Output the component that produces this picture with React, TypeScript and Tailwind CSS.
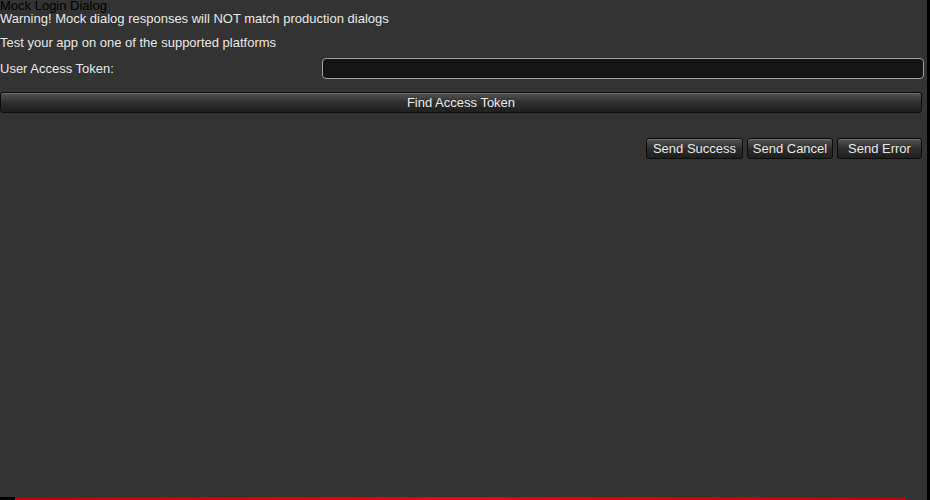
const font = { fontFamily: '"Liberation Sans", Arial, sans-serif' }

function DarkButton({ label, className }: { label: string; className?: string }) {
  return (
    <button
      className={
        'h-[21px] rounded-[3px] border border-[#0c0c0c] bg-gradient-to-b from-[#555] via-[#2e2e2e] to-[#1f1f1f] text-[13px] leading-[19px] text-[#e8e8e8] shadow-[inset_0_1px_0_rgba(255,255,255,0.15)] ' +
        (className ?? '')
      }
    >
      {label}
    </button>
  )
}

export default function App() {
  return (
    <div className="flex h-[500px] w-[930px] overflow-hidden bg-[#333333]" style={font}>
      <div className="flex w-[927px] flex-col">
        <div className="-mt-[1px] text-[13px] leading-[13px] text-black">Mock Login Dialog</div>
        <div className="text-[13px] leading-[14px] text-[#e8e8e8]">
          Warning! Mock dialog responses will NOT match production dialogs
        </div>
        <div className="mt-[10px] text-[13px] leading-[14px] text-[#e8e8e8]">
          Test your app on one of the supported platforms
        </div>
        <div className="mt-[8px] flex items-center">
          <div className="w-[322px] text-[13px] leading-[14px] text-[#e8e8e8]">User Access Token:</div>
          <div className="mr-[3px] h-[21px] flex-1 rounded-[4px] border border-[#a0a0a0] bg-[#151515]" />
        </div>
        <DarkButton label="Find Access Token" className="mt-[13px] w-[922px]" />
        <div className="mt-[25px] flex justify-end gap-[4px] pr-[5px]">
          <DarkButton label="Send Success" className="w-[97px]" />
          <DarkButton label="Send Cancel" className="w-[86px]" />
          <DarkButton label="Send Error" className="w-[85px]" />
        </div>
        <div className="flex-1" />
        <div className="flex h-[3px]">
          <div className="w-[15px] bg-black" />
          <div className="w-[891px] bg-gradient-to-r from-[#b00] via-[#ff0000] to-[#b00]" />
        </div>
      </div>
      <div className="w-[3px] bg-black" />
    </div>
  )
}
